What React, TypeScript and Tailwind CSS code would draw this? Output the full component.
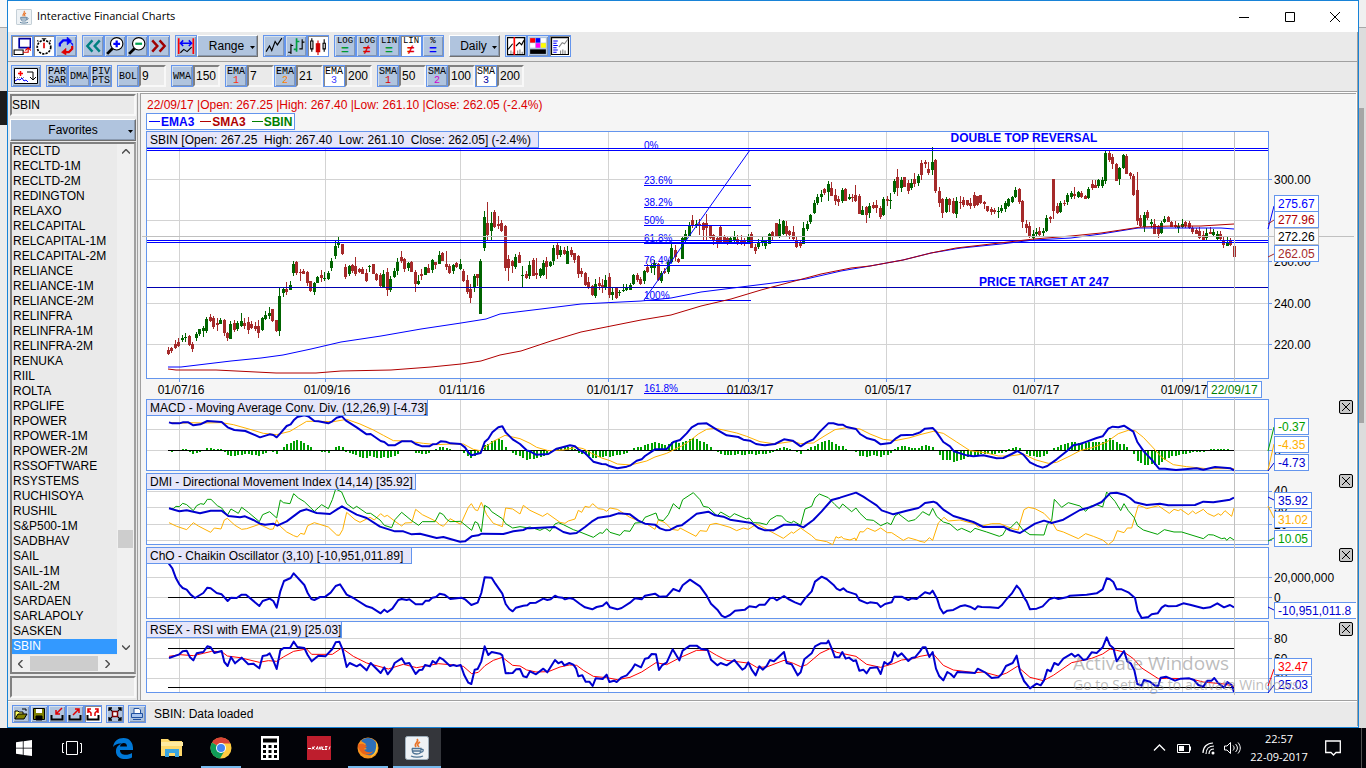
import type { ReactNode } from "react";

const SYMBOLS = [
  "RECLTD", "RECLTD-1M", "RECLTD-2M", "REDINGTON", "RELAXO", "RELCAPITAL", "RELCAPITAL-1M", "RELCAPITAL-2M",
  "RELIANCE", "RELIANCE-1M", "RELIANCE-2M", "RELINFRA", "RELINFRA-1M", "RELINFRA-2M", "RENUKA", "RIIL", "ROLTA",
  "RPGLIFE", "RPOWER", "RPOWER-1M", "RPOWER-2M", "RSSOFTWARE", "RSYSTEMS", "RUCHISOYA", "RUSHIL", "S&P500-1M",
  "SADBHAV", "SAIL", "SAIL-1M", "SAIL-2M", "SARDAEN", "SARLAPOLY", "SASKEN", "SBIN",
];

// One candle per entry: direction, then high, body top, body bottom and low on the plot's y scale.
const CANDLES =
  "r217 220 224 225,r217 218 221 223,r210 214 218 219,r208 212 216 217,g205 208 210 212,g203 207 208 212,r205 206 215 216,r212 214 219 222,g202 204 208 211,g199 199 204 206," +
  "g196 198 201 207,g187 189 201 203,r184 187 191 192,r186 188 197 199,r188 193 195 201,g188 190 194 194,r189 190 203 206,r202 203 208 211,g191 194 209 209,r190 193 200 202," +
  "g191 193 199 201,g183 191 196 197,r188 193 196 199,r187 192 200 204,r191 194 198 199,r192 196 199 201,r190 196 203 208,g187 188 200 201,g181 185 189 190,g177 183 186 189," +
  "r179 179 191 192,r190 190 201 202,g157 166 201 206,g157 159 163 167,r152 159 162 165,g151 155 160 160,g131 134 143 146,r131 132 143 145,r139 142 143 151,r139 141 144 144," +
  "r141 142 153 156,r151 151 161 162,g152 153 162 165,g146 147 153 153,r140 145 148 152,g142 148 149 151,g141 143 149 150,g128 131 138 141,g111 116 126 129,g107 113 115 118," +
  "r114 114 124 125,r134 137 147 149,g135 136 144 146,r134 135 141 143,r127 136 144 146,r138 139 142 143,r137 139 144 144,r139 143 151 152,g135 136 137 142,r134 134 144 144," +
  "r143 144 150 151,r143 145 156 157,g140 144 157 158,r138 142 160 166,g146 149 160 162,g138 141 147 148,g128 132 141 145,r121 127 131 133,r128 129 139 142,g132 133 138 141," +
  "r131 132 142 142,r140 142 154 162,g145 151 154 155,r139 144 146 150,g137 137 145 145,r134 138 143 143,g129 130 140 143,r132 132 135 139,g121 125 134 134,r122 123 131 131," +
  "r121 134 137 140,r134 136 143 144,g134 135 141 144,r132 133 137 138,g129 134 139 140,r139 141 151 152,r145 150 162 164,r154 159 168 173,g144 146 157 162,r144 144 148 156," +
  "g129 131 184 184,g81 87 118 121,r72 93 105 110,g82 93 101 110,r80 82 97 98,r86 94 96 99,r90 93 101 102,r95 96 138 141,r125 129 138 151,r130 131 136 143," +
  "g124 127 137 139,r122 125 133 133,g136 145 146 157,r141 144 148 149,g131 135 146 149,r128 130 146 146,r128 143 145 149,g138 139 146 148,g130 133 145 146,r127 131 137 149," +
  "g131 132 136 137,g115 118 131 135,r113 115 125 129,g116 120 125 127,r117 120 124 125,g116 121 134 134,r117 120 125 127,r123 123 130 133,r125 126 144 148,r138 141 144 147," +
  "r142 143 155 156,r147 152 158 159,r155 156 165 166,g149 154 166 168,r147 153 156 160,r149 155 157 163,g145 150 158 160,r143 147 165 168,g157 162 165 170,r157 158 168 169," +
  "g160 162 163 166,g154 160 161 162,g154 158 160 161,g153 155 160 160,g144 145 154 155,r143 145 150 152,r147 149 154 155,g140 141 151 154,r134 137 142 143,g134 136 138 143," +
  "g130 133 138 145,r133 134 150 151,g141 143 151 153,r138 141 143 144,g130 132 142 144,g113 118 132 133,r115 120 127 131,r128 129 132 133,g107 108 129 129,g100 104 110 113," +
  "g92 95 106 107,r85 90 95 98,g90 94 96 98,r89 94 96 105,r92 93 100 110,r84 93 98 110,r95 95 108 109,r104 105 111 115,r106 108 112 118,r96 97 112 114," +
  "r105 106 113 114,r106 108 114 115,g106 108 112 113,g101 107 110 113,r105 109 112 115,r105 110 114 115,r108 110 113 116,g104 106 113 114,r102 104 118 118,r114 117 121 124," +
  "g109 113 117 119,g107 111 113 116,g110 111 116 119,g103 104 114 114,r101 102 107 111,r93 93 106 106,g89 94 106 108,g90 91 104 105,r91 96 104 107,r100 101 105 109," +
  "r96 102 109 111,r107 111 117 118,r110 113 116 118,g92 98 114 114,g91 94 99 101,g84 85 92 94,g70 73 83 84,g64 67 73 75,g60 64 67 72,r58 59 63 65," +
  "g51 54 62 71,r52 58 66 66,r59 65 71 75,r66 69 72 76,g58 60 71 73,r58 59 71 71,g64 67 69 70,r64 67 68 72,r55 65 71 72,r64 66 84 84," +
  "g76 80 85 85,r76 77 85 93,g73 76 83 88,r72 75 78 79,r70 75 78 83,r76 78 87 89,g67 69 85 86,r66 69 71 76,g63 70 71 79,g49 51 62 64," +
  "r39 47 58 66,g47 50 58 62,r47 47 57 57,r50 53 61 64,g49 53 58 60,r43 49 54 57,g44 46 53 56,r30 33 45 50,r30 32 34 38,r32 39 43 45," +
  "g17 32 40 45,r29 30 61 63,r57 61 73 77,r68 69 83 88,g67 69 82 83,r68 69 75 82,r68 71 83 84,g67 71 84 88,r66 72 73 79,r67 70 75 77," +
  "r70 70 75 76,r68 73 76 79,r62 65 76 78,r66 66 75 76,r65 65 73 74,r71 72 74 79,r76 76 81 82,r77 79 82 85,r78 80 82 84,g77 81 82 88," +
  "g75 78 81 83,g71 73 79 82,g68 69 76 77,g66 67 72 73,g57 60 67 68,r58 59 72 74,r70 71 92 98,r90 94 98 103,r92 96 107 108,g100 104 108 110," +
  "g98 102 104 107,r97 101 105 106,g98 101 103 106,g85 88 101 102,r86 87 89 93,r49 49 81 89,r73 76 83 84,g71 73 82 83,r70 73 74 76,g63 65 72 75," +
  "g61 63 67 69,r57 64 66 69,g61 62 67 68,r61 63 67 68,r65 66 69 69,g57 59 68 69,r50 54 58 60,r50 55 58 58,g49 50 56 58,g47 50 56 58," +
  "g20 23 51 54,r20 23 30 32,r24 27 34 39,r33 34 51 51,g37 38 49 55,g24 25 38 39,r24 26 44 44,r42 43 46 49,r44 46 65 66,r42 60 91 95," +
  "r85 88 96 97,g82 85 97 102,r80 82 88 90,g89 92 94 98,r89 94 104 104,r95 96 104 108,g91 93 103 104,g86 89 92 93,r86 87 92 92,r91 92 97 97," +
  "r91 95 97 98,g93 96 98 103,g89 94 97 98,r91 92 96 98,r91 93 98 99,r96 98 102 104,r98 100 104 104,r97 101 108 109,r101 105 110 111,g98 103 108 110," +
  "r97 102 104 104,g99 102 105 106,g101 104 109 111,r101 104 109 110,r107 111 115 118,g107 112 116 116,r108 110 115 116,r115 116 127 128";

const EMA3 =
  "27,237 40,237 65,234 90,231 120,228 142,225 170,219 200,212 240,206 280,199 320,193 345,189 359,184 400,179 440,174 460,173 500,171 530,168 560,162 600,157 640,152 665,149 700,141 729,136 762,130 790,123 820,118 860,114 893,110 930,108 960,104 997,98 1030,98 1080,98 1093,99";
const SMA3 =
  "27,239 35,240 75,240 115,242 135,243 175,243 200,241 250,240 290,237 320,234 340,231 359,225 380,221 410,211 440,202 470,196 500,190 530,185 560,176 590,169 620,160 650,152 680,144 710,138 729,136 762,130 790,123 815,118 850,114 893,109 930,106 960,103 1000,97 1030,96 1060,96 1093,94";

// Indicator traces are kept in three sections, each 1170 units wide, at three units to the pixel.
const SECTION = 1170;

const MACD = [
  "87,73 97,76 118,76 128,73 145,73 160,82 181,79 202,69 245,72 263,88 283,96 316,99 347,112 360,118 389,109 400,111 410,118 421,106 440,84 452,79 461,67 472,57 493,52 506,56 523,69 535,70 565,76 577,70 590,59 606,55 617,67 650,88 680,109 692,108 722,129 733,132 745,142 764,142 785,130 815,130 827,138 847,145 868,145 878,139 890,138 902,130 917,131 931,136 962,138 975,148 985,163 994,172 1022,165 1034,132 1045,122 1057,103 1075,88 1087,85 1097,103 1118,124 1140,138 1160,157",
  "0,160 18,170 55,168 80,152 92,149 120,142 135,145 145,154 165,165 190,191 215,198 228,199 240,205 262,211 290,206 302,202 320,188 335,184 345,174 375,154 410,153 430,132 450,126 470,106 485,88 505,77 530,76 560,95 590,112 625,117 640,125 660,128 678,138 705,142 735,138 762,124 788,128 812,145 830,133 850,124 870,101 895,76 910,76 925,80 938,80 950,87 978,93 990,108 1012,121 1035,127 1052,139 1082,135 1098,121 1112,112 1150,110 1165,105",
  "0,103 15,92 38,90 48,100 70,132 90,145 102,160 140,172 160,175 190,172 230,181 250,180 275,168 292,159 310,170 330,193 350,203 368,209 382,204 410,184 440,160 460,142 480,138 500,131 530,120 548,115 565,92 578,86 595,88 612,83 640,101 652,132 672,161 695,185 717,212 735,212 768,216 830,211 850,215 885,207 932,211 942,217",
];
const MACD_SIGNAL = [
  "87,73 118,76 150,74 190,75 245,74 280,80 330,94 370,106 410,110 450,100 475,85 500,70 530,70 580,71 620,64 660,78 700,96 730,112 760,128 800,129 850,136 890,140 930,138 970,138 1000,154 1020,158 1060,130 1095,112 1140,122",
  "0,136 20,148 55,158 100,156 140,148 160,152 185,166 215,180 240,188 262,198 302,201 350,189 375,177 410,166 430,156 455,144 480,128 505,108 530,94 555,91 580,96 620,105 650,115 690,131 735,138 788,130 812,137 850,135 885,113 915,95 950,89 990,93 1020,108 1060,124 1095,128 1140,119",
  "0,110 40,100 70,106 110,132 150,158 200,165 235,174 270,174 310,168 345,185 385,196 410,193 450,174 480,158 520,148 560,132 595,107 625,97 645,98 670,118 700,150 725,178 760,200 800,206 860,212 942,212",
];
const ADX = [
  "87,331 118,340 140,337 180,346 212,338 245,338 265,354 300,358 315,355 340,366 360,377 375,380 400,377 412,383 440,370 480,340 500,334 530,345 570,348 590,335 606,325 625,336 650,350 680,360 720,386 765,400 790,400 815,409 840,407 890,420 910,417 960,431 975,430 995,415 1015,412 1025,407 1090,408 1120,400 1150,396 1160,391",
  "0,391 60,388 75,387 100,402 120,407 140,405 165,387 185,371 205,359 240,354 265,346 300,349 325,368 345,377 375,380 390,391 408,397 420,396 440,385 455,382 480,363 500,347 535,341 555,352 580,356 600,365 665,375 685,390 705,397 730,397 762,380 800,380 820,388 850,366 875,340 905,306 930,299 978,284 1000,296 1015,306 1040,322 1055,337 1090,349 1130,338 1165,330",
  "0,327 15,315 40,311 50,315 70,335 100,354 160,372 190,387 250,386 270,397 300,405 345,377 372,368 395,375 430,365 480,336 510,328 545,312 570,286 590,284 615,291 630,300 645,313 680,321 720,317 745,322 825,321 850,311 880,313 910,308 930,305 942,299",
];
const DI_PLUS = [
  "87,331 100,332 108,325 118,326 128,316 140,320 160,338 170,323 182,317 192,319 202,304 213,304 232,323 245,330 262,352 273,333 295,346 305,328 325,343 358,371 368,350 389,341 410,360 421,306 430,314 450,317 461,287 475,300 493,311 523,340 545,320 565,332 577,305 587,273 605,282 620,317 640,332 650,325 680,346 692,346 720,366 733,382 755,389 765,365 785,343 815,368 836,382 847,371 885,371 899,344 910,350 920,364 930,371 962,370 995,397 1005,371 1013,375 1024,402 1034,322 1047,330 1055,341 1087,362 1097,377 1118,390 1140,386 1160,389",
  "0,387 30,397 45,390 60,400 75,378 85,374 100,380 130,395 150,402 190,418 210,404 218,406 230,392 240,403 270,412 282,398 300,400 315,375 335,374 345,358 378,345 385,365 400,368 415,350 430,317 448,333 458,305 490,284 510,305 520,325 535,328 562,354 572,342 600,358 613,347 650,363 658,360 670,374 690,375 710,380 720,365 740,353 755,354 770,370 785,375 790,369 812,382 825,333 845,325 855,300 868,288 895,299 915,320 928,332 938,318 965,341 978,330 990,346 1010,365 1030,367 1052,383 1072,374 1083,380 1095,354 1105,347 1135,370 1155,365",
  "0,350 8,341 28,352 38,331 50,355 70,372 90,378 112,397 125,391 152,403 165,391 200,402 238,415 248,411 260,391 270,391 290,371 308,395 330,410 372,411 382,378 395,368 403,304 425,328 445,314 480,324 497,340 510,325 530,320 548,327 560,282 585,310 602,338 612,317 625,338 642,358 652,383 670,396 713,409 733,395 762,402 785,402 850,422 865,410 880,411 905,422 915,420 920,427 930,418 942,426",
];
const DI_MINUS = [
  "87,374 110,385 140,395 160,374 175,384 212,403 223,390 243,393 253,366 262,361 285,382 305,394 320,392 358,379 390,394 400,393 410,365 421,385 440,402 450,407 461,413 472,417 482,406 493,409 503,383 523,374 565,387 590,411 598,412 608,395 620,343 645,365 660,373 690,358 703,366 722,347 733,356 742,352 765,370 785,384 795,375 815,374 827,334 847,350 870,361 888,370 899,380 910,385 930,362 962,379 985,328 994,317 1005,335 1013,338 1024,313 1040,350 1060,376 1087,386 1097,330 1118,333 1140,348 1150,322",
  "0,337 38,355 52,346 90,373 105,376 115,369 135,363 145,337 155,343 165,325 178,328 188,317 205,332 220,334 230,340 240,330 262,334 300,358 350,378 375,394 385,366 405,374 425,394 445,397 450,390 498,415 510,398 530,400 540,380 558,376 600,388 620,398 640,390 655,394 680,378 710,394 760,421 785,402 790,406 812,390 845,413 858,425 890,431 908,440 918,416 925,420 935,416 940,422 960,426 975,420 978,428 990,401 1000,402 1012,390 1035,400 1052,390 1072,404 1085,404 1120,427 1135,419 1160,426",
  "0,430 15,433 28,419 38,427 55,375 72,358 85,369 120,366 165,378 175,387 215,377 240,377 280,393 295,396 300,375 312,335 325,328 345,332 372,346 395,370 410,396 430,402 475,422 497,407 520,415 548,426 565,440 580,428 592,398 612,404 622,390 635,390 655,322 670,327 680,332 715,323 748,346 762,334 775,338 782,334 805,350 818,339 827,347 850,334 862,346 882,355 895,347 903,352 915,338 935,355 942,330",
];
const CHAIKIN = [
  "85,495 97,511 108,541 118,559 128,570 140,575 152,590 165,600 190,585 202,569 212,571 230,585 245,589 263,609 273,599 290,600 305,590 318,590 358,624 368,609 389,602 400,609 410,629 421,580 432,549 452,540 461,526 493,561 503,585 514,603 523,606 540,597 556,596 572,584 587,564 600,559 620,590 640,600 680,625 695,629 722,646 733,635 742,642 757,632 775,606 785,603 800,606 808,604 827,619 847,619 857,608 867,608 877,599 888,597 899,587 913,590 931,603 964,599 975,604 994,621 1013,614 1024,585 1034,538 1055,539 1066,557 1087,587 1097,618 1108,633 1118,640 1128,629 1150,623 1162,622",
  "0,615 18,614 40,602 52,606 62,604 75,593 85,598 97,599 105,604 118,600 130,603 150,618 165,628 187,634 200,627 218,623 230,613 240,628 262,634 275,630 300,614 315,601 335,604 345,593 375,587 388,596 410,595 430,573 448,580 458,562 480,545 510,565 530,593 543,617 562,635 575,653 585,658 600,651 615,638 645,635 658,625 678,628 688,620 705,620 720,601 730,599 740,607 762,594 775,603 795,613 812,620 825,602 845,580 855,551 875,536 890,543 910,560 920,572 930,577 940,571 950,580 978,589 988,606 1012,616 1020,613 1042,616 1052,627 1065,618 1085,613 1093,596 1115,596 1135,606 1145,601 1160,603",
  "0,595 15,583 30,587 38,578 52,604 60,630 70,646 82,638 100,636 120,625 135,622 150,626 165,634 173,625 185,627 210,628 235,630 245,622 260,603 275,587 290,563 300,574 312,598 320,610 330,634 350,632 368,625 388,604 403,599 415,603 440,598 450,593 500,590 530,586 548,574 560,541 570,544 580,552 590,574 605,574 625,583 645,600 653,638 665,660 685,657 695,649 713,646 725,629 735,622 745,625 770,624 790,616 810,620 850,631 870,628 892,616 912,628 930,621 942,628",
];
const RSI = [
  "87,780 118,769 128,760 140,758 150,778 160,787 170,766 190,762 202,745 212,748 223,765 245,759 253,792 263,804 273,777 285,796 305,779 325,799 340,797 358,811 368,774 380,772 389,766 400,788 410,813 421,757 431,750 450,750 461,731 472,747 493,750 503,771 515,790 535,773 556,775 577,753 587,733 598,731 608,755 620,807 629,795 650,805 660,799 680,817 692,795 722,825 733,808 743,829 757,811 764,795 785,781 795,797 808,795 827,828 838,816 847,815 855,801 870,805 878,789 888,796 899,779 910,785 930,804 940,801 950,804 962,801 973,832 985,854 994,858 1004,815 1013,813 1024,790 1034,745 1045,771 1055,762 1080,767 1087,772 1097,826 1118,825 1128,814 1140,813 1150,835 1160,838",
  "0,820 18,829 40,812 52,823 75,786 85,796 95,791 103,802 118,795 130,800 138,811 145,835 157,832 167,851 178,851 188,864 197,841 218,843 230,830 238,852 252,848 260,852 275,838 290,832 305,815 315,799 333,808 345,782 355,780 365,768 378,769 387,816 397,801 410,794 428,754 448,787 458,758 480,743 500,743 512,752 533,756 543,785 562,802 572,795 590,802 613,786 637,815 645,810 655,793 665,815 677,832 688,805 698,815 710,804 720,786 732,790 762,762 770,795 785,799 803,832 812,823 823,784 845,766 855,745 872,736 890,736 895,728 905,751 915,778 928,778 937,762 947,782 957,779 970,789 978,787 988,818 1000,815 1010,826 1020,810 1042,808 1052,828 1063,792 1073,799 1085,790 1093,762 1103,775 1115,766 1135,789 1145,780 1155,778",
  "0,760 8,748 17,748 28,777 38,762 48,812 58,835 70,847 82,822 92,828 102,838 112,822 165,825 173,812 195,823 215,840 235,838 245,828 258,804 278,795 290,773 300,820 312,849 330,871 350,857 362,862 372,847 382,815 392,820 403,795 415,801 430,782 455,767 465,776 475,770 490,786 500,784 515,763 530,765 548,748 560,718 570,742 580,750 590,790 612,759 622,790 632,796 643,817 652,858 665,863 672,846 690,851 705,863 715,863 722,839 738,836 765,848 782,842 808,841 822,846 835,861 850,866 862,848 875,848 883,840 895,856 912,869 922,852 935,861 942,882",
];
const RSI_EMA = [
  "87,775 120,770 160,773 190,766 215,760 245,761 262,774 300,779 358,793 385,788 410,790 430,777 461,760 500,753 515,769 577,769 605,750 640,775 680,795 720,806 745,813 790,799 830,809 895,797 940,801 970,805 995,827 1015,823 1035,803 1060,787 1087,778 1118,802 1140,804 1160,816",
  "0,818 18,822 55,821 90,807 118,801 140,802 160,817 190,835 230,839 262,845 300,838 335,822 378,794 410,800 448,780 500,757 535,757 560,772 590,787 660,796 680,808 710,807 762,787 790,796 812,806 830,800 870,766 900,752 920,763 978,775 1010,799 1052,808 1090,797 1115,786 1150,782",
  "0,775 40,768 70,802 100,816 165,824 190,822 235,834 260,825 292,805 330,838 370,848 400,832 455,794 515,781 548,768 570,753 590,757 612,762 640,782 665,810 715,842 740,841 810,842 850,852 912,858 942,865",
];

type Point = [number, number];

function joinSections(sections: string[]): Point[] {
  return sections.flatMap((section, s) =>
    section.split(" ").map((pair): Point => {
      const [x, y] = pair.split(",").map(Number);
      return [x + s * SECTION, y];
    }),
  );
}

function sample(points: Point[], x: number) {
  const i = points.findIndex((p) => p[0] >= x);
  if (i < 0) return points[points.length - 1][1];
  if (i === 0) return points[0][1];
  const [x0, y0] = points[i - 1];
  const [x1, y1] = points[i];
  return x1 === x0 ? y1 : y0 + ((y1 - y0) * (x - x0)) / (x1 - x0);
}

const MONTHS = [
  { x: 38, label: "01/07/16" },
  { x: 184, label: "01/09/16" },
  { x: 319, label: "01/11/16" },
  { x: 467, label: "01/01/17" },
  { x: 607, label: "01/03/17" },
  { x: 745, label: "01/05/17" },
  { x: 893, label: "01/07/17" },
  { x: 1041, label: "01/09/17" },
];

const BAR_STEP = 3.472;
const CURSOR_X = 1093;

/* ---------- chart pieces ---------- */

function Tag({ y, w, color, text, border = "#6495ed" }: { y: number; w: number; color: string; text: string; border?: string }) {
  return (
    <g>
      <rect x="1133.5" y={y + 0.5} width={w} height="16" fill="#fff" stroke={border} shapeRendering="crispEdges" />
      <text x="1137" y={y + 13} fill={color}>{text}</text>
    </g>
  );
}

function PlotTitle({ y, w, text }: { y: number; w: number; text: string }) {
  return (
    <g>
      <rect x="5.5" y={y + 0.5} width={w} height="16" fill="#e6e6fa" stroke="#6495ed" shapeRendering="crispEdges" />
      <text x="9" y={y + 13} xmlSpace="preserve">{text}</text>
    </g>
  );
}

function PriceChart() {
  return (
    <svg viewBox="0 0 1215 269" className="block w-full text-[12px]" role="img" aria-label="SBIN daily price">
      <g shapeRendering="crispEdges">
        <rect x="5.5" y="1.5" width="1122" height="247" fill="#fff" stroke="#6495ed" />
        <g stroke="#d3d3d3">
          {MONTHS.map((m) => <path key={m.x} d={`M${m.x + 0.5} 2V248`} />)}
          {[49, 90, 131, 173, 214].map((y) => <path key={y} d={`M6 ${y + 0.5}H1127`} />)}
        </g>
        <g stroke="#6495ed">
          {MONTHS.map((m) => <path key={m.x} d={`M${m.x + 0.5} 248v4`} />)}
          {[49, 131, 173, 214].map((y) => <path key={y} d={`M1127 ${y + 0.5}h4`} />)}
        </g>
        {CANDLES.split(",").map((candle, i) => {
          const [high, top, bottom, low] = candle.slice(1).split(" ").map(Number);
          const x = Math.round(27 + i * BAR_STEP);
          return (
            <g key={i} fill={candle[0] === "g" ? "#006400" : "#a52a2a"}>
              <rect x={x} y={high} width="1" height={Math.max(1, low - high)} />
              <rect x={x - 1} y={top} width="3" height={Math.max(1, bottom - top)} />
            </g>
          );
        })}
        <g stroke="#0000ff">
          <path d="M6 18.5H1127M6 20.5H1127M6 110.5H1127M6 112.5H1127" />
          <path d="M6 157.5H1127" stroke="#0000b0" />
          <path d="M503 55.5H610M503 77.5H610M503 95.5H610M503 113.5H610M503 135.5H610M503 170.5H610M503 263.5H610" />
        </g>
      </g>
      <polyline points={EMA3} fill="none" stroke="#0000ff" />
      <polyline points={SMA3} fill="none" stroke="#b00000" />
      <path d="M503 170L609 20" stroke="#0000ff" />
      <g fill="#0000ff" className="text-[10px]">
        <text x="503" y="19">0%</text>
        <text x="503" y="54">23.6%</text>
        <text x="503" y="76">38.2%</text>
        <text x="503" y="94">50%</text>
        <text x="503" y="112">61.8%</text>
        <text x="503" y="134">76.4%</text>
        <text x="503" y="169">100%</text>
        <text x="503" y="262">161.8%</text>
      </g>
      <g fill="#0000ff" className="font-bold" textAnchor="middle">
        <text x="883" y="12">DOUBLE TOP REVERSAL</text>
        <text x="903" y="156">PRICE TARGET AT 247</text>
      </g>
      {MONTHS.map((m) => <text key={m.x} x={m.x + 2} y="264" textAnchor="middle">{m.label}</text>)}
      <text x="1133" y="54">300.00</text>
      <text x="1133" y="136">260.00</text>
      <text x="1133" y="178">240.00</text>
      <text x="1133" y="219">220.00</text>
      <path d={`M1 106.5H1213M${CURSOR_X + 0.5} 2V269`} stroke="#c0c0c0" />
      <path d="M1127 99L1133 76" stroke="#0000ff" />
      <path d="M1127 94L1133 90M1127 127L1133 124" stroke="#a52a2a" />
      <Tag y={65} w={44} color="#0000ff" text="275.67" />
      <Tag y={81} w={44} color="#b00000" text="277.96" />
      <Tag y={98} w={44} color="#000" text="272.26" border="#c0c0c0" />
      <Tag y={115} w={44} color="#a52a2a" text="262.05" />
      <rect x="1066.5" y="251.5" width="54" height="16" fill="#fff" stroke="#6495ed" shapeRendering="crispEdges" />
      <text x="1070" y="264" fill="#008000">22/09/17</text>
      <PlotTitle y={1} w={392} text="SBIN [Open: 267.25  High: 267.40  Low: 261.10  Close: 262.05] (-2.4%)" />
    </svg>
  );
}

interface PanelProps {
  index: number;
  title: string;
  titleWidth: number;
  grid: number[];
  levels?: number[];
  traces: { points: string[]; color: string; width: number }[];
  histogram?: ReactNode;
  children: ReactNode;
}

function IndicatorPanel({ index, title, titleWidth, grid, levels = [], traces, histogram, children }: PanelProps) {
  return (
    <section className="relative">
      <svg viewBox="0 0 1215 74" className="block w-full text-[12px]" role="img" aria-label={title}>
        <g shapeRendering="crispEdges">
          <rect x="5.5" y="0.5" width="1122" height="71" fill="#fff" stroke="#6495ed" />
          <g stroke="#d3d3d3">
            {MONTHS.map((m) => <path key={m.x} d={`M${m.x + 0.5} 1V71`} />)}
            {grid.map((y) => <path key={y} d={`M6 ${y + 0.5}H1127`} />)}
          </g>
          {grid.map((y) => <path key={y} d={`M1127 ${y + 0.5}h4`} stroke="#6495ed" />)}
        </g>
        {histogram}
        {levels.map((y) => (
          <path key={y} d={`M27 ${y + 0.5}H1093`} stroke="#000" shapeRendering="crispEdges" />
        ))}
        <g transform={`translate(-1 ${-1 - index * 74}) scale(0.33333)`} fill="none" strokeLinejoin="round">
          {traces.map((t) => (
            <polyline key={t.color} points={joinSections(t.points).join(" ")} stroke={t.color} strokeWidth={t.width * 3} />
          ))}
        </g>
        <path d={`M${CURSOR_X + 0.5} 0V74`} stroke="#c0c0c0" />
        {children}
        <PlotTitle y={0} w={titleWidth} text={title} />
      </svg>
      <button aria-label={`Close ${title}`} className="absolute top-px right-[3px] size-[14px] rounded-xs border border-black bg-[#c8c8c8]">
        <svg viewBox="0 0 12 12" className="block size-3" stroke="#000">
          <path d="M2 2L10 10M10 2L2 10" />
        </svg>
      </button>
    </section>
  );
}

function MacdHistogram() {
  const macd = joinSections(MACD);
  const signal = joinSections(MACD_SIGNAL);
  return (
    <g fill="#00a000" shapeRendering="crispEdges">
      {Array.from({ length: 306 }, (_, i) => {
        const x = 87 + i * BAR_STEP * 3;
        const h = Math.round((sample(signal, x) - sample(macd, x)) / 3);
        if (h === 0) return null;
        return <rect key={i} x={Math.round(x / 3 - 2)} y={h > 0 ? 51 - h : 52} width="2" height={Math.abs(h)} />;
      })}
    </g>
  );
}

/* ---------- toolbar pieces ---------- */

const RAISED = "border border-[#6495ed] bg-[#b0c4de] shadow-[inset_1px_1px_#d4e0ee,inset_-1px_-1px_#8296b4]";
const PRESSED = "border border-[#6495ed] bg-white shadow-[inset_1px_1px_#8a8a8a]";
const SUNKEN = "border-2 border-t-[#808080] border-l-[#808080] border-r-[#f8f8f8] border-b-[#f8f8f8] bg-[#eaeaea] outline-none";

function Tool({ label, on, children }: { label: string; on?: boolean; children: ReactNode }) {
  return (
    <button aria-label={label} aria-pressed={!!on} className={`flex size-[22px] items-center justify-center ${on ? PRESSED : RAISED}`}>
      <svg viewBox="0 0 16 16" className="size-[18px] shrink-0" fill="none" stroke="#000">{children}</svg>
    </button>
  );
}

function TextTool({ top, bottom, color = "text-black", on }: { top: string; bottom?: string; color?: string; on?: boolean }) {
  return (
    <button className={`flex h-[22px] w-[22px] flex-col items-center justify-center font-['Liberation_Mono'] text-[10px] leading-[9px] ${on ? PRESSED : RAISED}`}>
      <span>{top}</span>
      {bottom && <span className={color}>{bottom}</span>}
    </button>
  );
}

function Period({ top, bottom, color, value, on }: { top: string; bottom?: string; color?: string; value: string; on?: boolean }) {
  return (
    <div className="flex">
      <TextTool top={top} bottom={bottom} color={color} on={on} />
      <input aria-label={`${top} ${bottom ?? ""} period`} defaultValue={value} className={`h-[22px] w-[27px] pl-px ${SUNKEN}`} />
    </div>
  );
}

function Dropdown({ label, className }: { label: string; className: string }) {
  return (
    <div className="relative">
      <select aria-label={label} className={`h-[22px] appearance-none border border-t-white border-l-white border-r-[#707070] border-b-[#707070] bg-[#b0c4de] text-center shadow-[inset_-1px_-1px_#8a9ab0] ${className}`}>
        <option>{label}</option>
      </select>
      <svg viewBox="0 0 5 3" className="pointer-events-none absolute top-[11px] right-[3px] h-[3px] w-[5px]">
        <path d="M0 0H5L2.5 3Z" />
      </svg>
    </div>
  );
}

function ScaleTool({ name, mark, color, on }: { name: string; mark: string; color: string; on?: boolean }) {
  return (
    <button aria-label={`${name} scale ${mark}`} className={`flex size-[22px] flex-col items-center pt-px font-['Liberation_Mono'] text-[9px] leading-[9px] ${on ? PRESSED : RAISED}`}>
      <span>{name}</span>
      <span className={`text-[13px] leading-[9px] font-bold ${color}`}>{mark}</span>
    </button>
  );
}

function MainToolbar() {
  return (
    <div className="flex h-[30px] gap-[5px] border-b border-[#a0a0a0] bg-[#eaeaea] px-[3px] pt-[3px] shadow-[0_1px_#fff]">
      <div className="flex">
        <Tool label="New window" on>
          <path d="M5.500 1.500h10v8h-10z" stroke="#0000a0" strokeWidth="1.500" />
          <path d="M1 11.500h8v4H1z" />
          <path d="M9 13.500h4.500V10M11 12l2.500-2.500L16 12" stroke="#e00000" />
        </Tool>
        <Tool label="Timer" on>
          <circle cx="8" cy="9" r="6" strokeDasharray="2 1" strokeWidth="1.500" />
          <path d="M6 1.500h4M8 1v2M2 3l1 1M14 3l-1 1" />
          <path d="M8 5v5" stroke="#e00000" strokeWidth="1.500" />
        </Tool>
        <Tool label="Refresh">
          <path d="M2.500 8.500V6l3-3h4" stroke="#0000ff" strokeWidth="2" />
          <path d="M9 0l4 3.500L9 7zM11 4l3 2v2" fill="#0000ff" stroke="#0000ff" strokeWidth="0.500" />
          <path d="M13.500 8v2.500l-3 3h-3" stroke="#e00000" strokeWidth="2" />
          <path d="M8 10l-4 3.500L8 16z" fill="#e00000" stroke="#e00000" strokeWidth="0.500" />
        </Tool>
      </div>
      <div className="flex">
        <Tool label="Back"><path d="M7.500 3L3 8l4.500 5M14 3L9.500 8l4.500 5" stroke="#008080" strokeWidth="2.200" /></Tool>
        <Tool label="Zoom in">
          <path d="M6 10L1 15" strokeWidth="2.500" />
          <circle cx="9.500" cy="6" r="5.500" fill="#fff" />
          <path d="M6.500 6h6M9.500 3v6" stroke="#0000ff" strokeWidth="2" />
        </Tool>
        <Tool label="Zoom out">
          <path d="M6 10L1 15" strokeWidth="2.500" />
          <circle cx="9.500" cy="6" r="5.500" fill="#fff" />
          <path d="M6.500 6h6" stroke="#00a050" strokeWidth="2" />
        </Tool>
        <Tool label="Forward"><path d="M2 3l4.500 5L2 13M8.500 3L13 8l-4.500 5" stroke="#a00000" strokeWidth="2.200" /></Tool>
      </div>
      <div className="flex">
        <Tool label="Fit range">
          <path d="M1.500 1v14M14.500 1v14" stroke="#ff0000" strokeWidth="1.500" />
          <path d="M3 5.500h10M5.500 3L3 5.500 5.500 8M10.500 3L13 5.500 10.500 8" stroke="#0000ff" strokeWidth="1.300" />
          <path d="M3 14l3-3 3 2 4-4" />
        </Tool>
        <Dropdown label="Range" className="w-[61px] pr-[2px]" />
      </div>
      <div className="flex">
        <Tool label="Line"><path d="M1 13l3-5 2 4 3-8 2 3 4-6" /></Tool>
        <Tool label="Bars">
          <path d="M3.500 6v9M1 13.500h2M3.500 7.500h2M13.500 2v9M11 10.500h2M13.500 4.500h2" />
          <path d="M8.500 1v12M6 11h2.500M8.500 4H11" stroke="#00a040" strokeWidth="1.500" />
        </Tool>
        <Tool label="Candles" on>
          <path d="M2.500 1v2M2.500 11v2M13.500 2v3M13.500 10v3M1.500 3.500h2v7h-2zM12.500 5.500h2v5h-2z" />
          <path d="M8 3v13" stroke="#d00000" />
          <path d="M6.500 6h3v7h-3z" fill="#d00000" stroke="#d00000" />
        </Tool>
      </div>
      <div className="flex">
        <ScaleTool name="LOG" mark="=" color="text-[#009a30]" />
        <ScaleTool name="LOG" mark="≠" color="text-[#e00000]" />
        <ScaleTool name="LIN" mark="=" color="text-[#009a30]" />
        <ScaleTool name="LIN" mark="≠" color="text-[#e00000]" on />
        <ScaleTool name="%" mark="=" color="text-[#0000ff]" />
      </div>
      <Dropdown label="Daily" className="w-[51px] pr-[2px]" />
      <div className="flex">
        <Tool label="Crosshair">
          <path d="M0.500 0.500h15v15H0.500z" fill="#fff" />
          <path d="M3.500 12v3M5.500 13v2M9.500 12v3M11.500 11v4M13.500 13v2" stroke="#888" />
          <path d="M1 11l4-5M8 8l3-3 2 2 2-4" />
          <path d="M6.500 0v16" stroke="#ff0000" strokeWidth="1.500" />
        </Tool>
        <Tool label="Colours">
          <g stroke="none">
            <path d="M1 1h4.500v4H1z" fill="#ff0000" />
            <path d="M6 1h4v4H6z" fill="#0000ff" />
            <path d="M10.500 1H15v4h-4.500z" fill="#fff" />
            <path d="M1 5.500h4.500v4H1z" fill="#fff" />
            <path d="M6 5.500h4v4H6z" fill="#ff00ff" />
            <path d="M10.500 5.500H15v4h-4.500z" fill="#ffff00" />
            <path d="M1 11h14v4H1z" fill="#000" />
          </g>
        </Tool>
        <Tool label="Data table" on>
          <path d="M0.500 0.500h15v15H0.500z" />
          <path d="M2 3.500h4M2 5.500h3M2 7.500h4M2 9.500h3M2 11.500h4M2 13.500h3" stroke="#0000ff" />
          <path d="M7 9l3-4 2 1 3-4M8.500 12v3M10.500 11v4M12.500 12v3" stroke="#888" />
        </Tool>
      </div>
    </div>
  );
}

function StudyToolbar() {
  return (
    <div className="flex h-[30px] gap-[5px] border-b border-[#a0a0a0] bg-[#eaeaea] px-[3px] pt-[3px] shadow-[0_1px_#fff]">
      <button aria-label="Add study" className={`flex h-[22px] w-[30px] items-center justify-center ${RAISED}`}>
        <svg viewBox="0 0 24 16" className="h-4 w-6" fill="none" stroke="#000">
          <path d="M0.500 0.500h23v15H0.500z" fill="#fff" />
          <path d="M4 5.500h5M6.500 3v5" stroke="#ff0000" strokeWidth="1.500" />
          <path d="M13 4h6v7M16 9l3 3 3-3" />
          <path d="M1 9.500h10" stroke="#888" strokeDasharray="1 1" />
          <path d="M1 13l3-2 2 1 2-2 2 3 2-1 2 2" stroke="#0000ff" />
        </svg>
      </button>
      <div className="flex">
        <TextTool top="PAR" bottom="SAR" />
        <TextTool top="DMA" />
        <TextTool top="PIV" bottom="PTS" />
      </div>
      <Period top="BOL" value="9" />
      <Period top="WMA" value="150" />
      <div className="flex">
        <Period top="EMA" bottom="1" color="text-[#ff3010]" value="7" />
        <Period top="EMA" bottom="2" color="text-[#ff8000]" value="21" />
        <Period top="EMA" bottom="3" color="text-[#4040ff]" value="200" on />
      </div>
      <div className="flex">
        <Period top="SMA" bottom="1" color="text-[#e00000]" value="50" />
        <Period top="SMA" bottom="2" color="text-[#d000d0]" value="100" />
        <Period top="SMA" bottom="3" color="text-[#0000a0]" value="200" on />
      </div>
    </div>
  );
}

function JavaCup({ className }: { className: string }) {
  return (
    <svg viewBox="0 0 24 24" className={className} fill="none">
      <rect x="0.500" y="0.500" width="23" height="23" rx="2" fill="#eef2f5" stroke="#9fb0bd" />
      <path d="M12 3c3 3-4 4-1 8M15 6c-3 2-3 3-1 5" stroke="#e8762c" strokeWidth="1.700" />
      <path d="M7 12.500h9c0 5-1 5.500-4.500 5.500S7.500 17 7 12.500M16 13.500c3-1 3 2 0 3M6 20c3 1.500 9 1.500 12 0M8 15h7" stroke="#4d7394" strokeWidth="1.300" />
    </svg>
  );
}

function SymbolPanel() {
  return (
    <aside className="flex w-[130px] shrink-0 flex-col border-r border-[#a0a0a0] bg-[#eaeaea] pr-px pb-px pl-[2px]">
      <input aria-label="Symbol" defaultValue="SBIN" className={`mt-px h-[22px] w-full ${SUNKEN}`} />
      <div className="mt-[3px]">
        <Dropdown label="Favorites" className="w-full" />
      </div>
      <div className="mt-px flex h-[532px] flex-col border-2 border-t-[#808080] border-r-[#a0a0a0] border-b-[#808080] border-l-[#808080]">
        <div className="flex flex-1">
          <ul role="listbox" aria-label="Favorites" className="flex-1 leading-[15px]">
            {SYMBOLS.map((s) => (
              <li key={s} role="option" aria-selected={s === "SBIN"} className={s === "SBIN" ? "bg-[#3399ff] pl-px text-white" : "pl-px"}>
                {s}
              </li>
            ))}
          </ul>
          <div className="flex w-[17px] flex-col items-center justify-between bg-[#f0f0f0] py-[5px]">
            <svg viewBox="0 0 8 5" className="h-[5px] w-2" fill="none" stroke="#505050" strokeWidth="1.500"><path d="M0 4.500L4 0.500 8 4.500" /></svg>
            <div className="mt-[376px] h-[18px] w-[15px] bg-[#cdcdcd]" />
            <svg viewBox="0 0 8 5" className="mt-auto h-[5px] w-2" fill="none" stroke="#505050" strokeWidth="1.500"><path d="M0 0.500L4 4.500 8 0.500" /></svg>
          </div>
        </div>
        <div className="flex h-[17px] items-center bg-[#f0f0f0] pl-[6px]">
          <svg viewBox="0 0 5 8" className="h-2 w-[5px]" fill="none" stroke="#505050" strokeWidth="1.500"><path d="M4.500 0L0.500 4 4.500 8" /></svg>
          <div className="mx-[7px] h-[15px] w-[68px] bg-[#cdcdcd]" />
          <svg viewBox="0 0 5 8" className="h-2 w-[5px]" fill="none" stroke="#505050" strokeWidth="1.500"><path d="M0.500 0L4.500 4 0.500 8" /></svg>
        </div>
      </div>
      <input aria-label="Filter" className={`mt-[2px] h-[22px] w-full ${SUNKEN}`} />
    </aside>
  );
}

function LegendEntry({ name, color }: { name: string; color: string }) {
  return (
    <span className={`flex items-center gap-px ${color}`}>
      <span className="h-px w-[11px] bg-current" />
      {name}
    </span>
  );
}

function ChartBoard() {
  return (
    <main className="relative ml-[2px] min-w-0 flex-1 border-t border-l border-[#a0a0a0] bg-[#f5f5f5] pb-[5px]">
      <p className="pt-[4px] pl-[6px] leading-[14px] text-[#dc0000]">
        22/09/17 |Open: 267.25 |High: 267.40 |Low: 261.10 |Close: 262.05 (-2.4%)
      </p>
      <div className="mt-px ml-[5px] flex h-[17px] w-fit items-center gap-[6px] border border-[#6495ed] bg-white px-[2px] font-bold">
        <LegendEntry name="EMA3" color="text-[#0000ff]" />
        <LegendEntry name="SMA3" color="text-[#b00000]" />
        <LegendEntry name="SBIN" color="text-[#008000]" />
      </div>
      <PriceChart />
      <IndicatorPanel
        index={0}
        title="MACD - Moving Average Conv. Div. (12,26,9) [-4.73]"
        titleWidth={281}
        grid={[30, 51]}
        levels={[51]}
        histogram={<MacdHistogram />}
        traces={[
          { points: MACD_SIGNAL, color: "#ffb000", width: 1 },
          { points: MACD, color: "#0000d0", width: 2 },
        ]}
      >
        <path d="M1127 52L1133 28" stroke="#00a000" />
        <path d="M1127 71L1133 45" stroke="#ffb000" />
        <path d="M1127 72L1133 64" stroke="#0000d0" />
        <text x="1133" y="57">0</text>
        <Tag y={19} w={34} color="#00a000" text="-0.37" />
        <Tag y={37} w={34} color="#ffb000" text="-4.35" />
        <Tag y={55} w={34} color="#0000d0" text="-4.73" />
      </IndicatorPanel>
      <IndicatorPanel
        index={1}
        title="DMI - Directional Movement Index (14,14) [35.92]"
        titleWidth={269}
        grid={[18, 34, 51, 67]}
        traces={[
          { points: DI_MINUS, color: "#ffb000", width: 1 },
          { points: DI_PLUS, color: "#00a000", width: 1 },
          { points: ADX, color: "#0000d0", width: 2 },
        ]}
      >
        <text x="1133" y="22">40</text>
        <text x="1133" y="39">30</text>
        <text x="1133" y="56">20</text>
        <path d="M1127 24L1133 27" stroke="#0000d0" />
        <path d="M1127 33L1133 45" stroke="#ffb000" />
        <path d="M1127 68L1133 65" stroke="#00a000" />
        <Tag y={19} w={37} color="#0000d0" text="35.92" />
        <Tag y={38} w={37} color="#ffb000" text="31.02" />
        <Tag y={57} w={37} color="#00a000" text="10.05" />
      </IndicatorPanel>
      <IndicatorPanel
        index={2}
        title="ChO - Chaikin Oscillator (3,10) [-10,951,011.89]"
        titleWidth={265}
        grid={[30, 50]}
        levels={[50]}
        traces={[{ points: CHAIKIN, color: "#0000d0", width: 2 }]}
      >
        <text x="1133" y="35">20,000,000</text>
        <text x="1133" y="55">0</text>
        <path d="M1127 60L1133 63" stroke="#0000d0" />
        <Tag y={55} w={90} color="#0000d0" text="-10,951,011.8" />
      </IndicatorPanel>
      <IndicatorPanel
        index={3}
        title="RSEX - RSI with EMA (21,9) [25.03]"
        titleWidth={195}
        grid={[17, 37, 57]}
        levels={[27, 66]}
        traces={[
          { points: RSI_EMA, color: "#ff0000", width: 1 },
          { points: RSI, color: "#0000d0", width: 2 },
        ]}
      >
        <text x="1133" y="22">80</text>
        <text x="1133" y="42">60</text>
        <text x="1133" y="61">40</text>
        <path d="M1127 65L1133 48" stroke="#ff0000" />
        <path d="M1127 72L1133 64" stroke="#0000d0" />
        <Tag y={37} w={37} color="#ff0000" text="32.47" />
        <Tag y={55} w={37} color="#0000d0" text="25.03" />
      </IndicatorPanel>
      <div className="pointer-events-none absolute right-[42px] bottom-[5px] w-[241px] font-['Open_Sans'] whitespace-nowrap text-[#909090]/60">
        <p className="text-[19px] leading-[24px]">Activate Windows</p>
        <p className="text-[14px] leading-[20px]">Go to Settings to activate Windows.</p>
      </div>
    </main>
  );
}

function SmallTool({ label, on, children }: { label: string; on?: boolean; children: ReactNode }) {
  return (
    <button aria-label={label} className={`flex size-[18px] items-center justify-center ${on ? PRESSED : RAISED}`}>
      <svg viewBox="0 0 14 14" className="size-[14px]" fill="none" stroke="#000">{children}</svg>
    </button>
  );
}

function StatusBar() {
  const tray = "M1.500 8v4.500h11V8";
  return (
    <footer className="flex h-[26px] items-center gap-1 border-t border-[#a0a0a0] bg-[#eaeaea] pl-1 shadow-[inset_0_1px_#fff]">
      <div className="flex">
        <SmallTool label="Open">
          <path d="M1 12V4h3l1 1h4v2" fill="#ffff60" />
          <path d="M1 12l3-5h9l-3 5z" fill="#808000" />
          <path d="M8 2h4v2" />
        </SmallTool>
        <SmallTool label="Save">
          <path d="M1.500 1.500h11v11h-11z" fill="#808000" />
          <path d="M4 2h6v4H4z" fill="#fff" stroke="none" />
          <path d="M4 9h6v4H4z" fill="#000" />
        </SmallTool>
        <SmallTool label="Import">
          <path d={tray} strokeWidth="2" />
          <path d="M12 1L6 7M6 3v4h4" stroke="#e00000" strokeWidth="1.500" />
        </SmallTool>
        <SmallTool label="Export">
          <path d={tray} strokeWidth="2" />
          <path d="M5 8l6-6M7 2h4v4" stroke="#e00000" strokeWidth="1.500" />
        </SmallTool>
        <SmallTool label="Export all" on>
          <path d={tray} strokeWidth="2" />
          <path d="M5 9V6L2 3M2 6V2h3M9 9V6l3-3M12 6V2H9" stroke="#e00000" strokeWidth="1.500" />
        </SmallTool>
      </div>
      <SmallTool label="Full screen">
        <path d="M4.500 4.500h5v5h-5z" fill="#fff" stroke="#800000" strokeWidth="1.500" />
        <path d="M1 4V1h3M10 1h3v3M13 10v3h-3M4 13H1v-3M1 1l3 3M13 1l-3 3M13 13l-3-3M1 13l3-3" strokeWidth="1.300" />
      </SmallTool>
      <SmallTool label="Print">
        <path d="M4 6V1.500h5L10.500 3v3" fill="#fff" stroke="#2050a0" />
        <path d="M1.500 6.500h11v4h-11zM3 12.500h8" fill="#a8c4ee" stroke="#2050a0" />
      </SmallTool>
      <span className="pl-1">SBIN: Data loaded</span>
    </footer>
  );
}

function TaskButton({ label, running, children }: { label: string; running?: boolean; children: ReactNode }) {
  return (
    <button aria-label={label} className="relative flex h-10 w-12 items-center justify-center">
      <svg viewBox="0 0 24 24" className="size-6" fill="none">{children}</svg>
      {running && <span className="absolute inset-x-1 bottom-0 h-[2px] bg-[#76b9ed]" />}
    </button>
  );
}

function Taskbar() {
  return (
    <div className="flex h-10 bg-[#020308] text-white">
      <TaskButton label="Start">
        <path d="M4 6.300l6.800-1v6.400H4zM11.600 5.200L20 4v7.700h-8.400zM4 12.400h6.800v6.400l-6.800-1zM11.600 12.400H20v7.700l-8.400-1.200z" fill="#fff" />
      </TaskButton>
      <TaskButton label="Task view">
        <path d="M6.500 5.500h11v13h-11zM4 7.500H2.500v9H4M20 7.500h1.500v9H20" stroke="#fff" />
      </TaskButton>
      <div className="ml-[3px] flex gap-px">
        <TaskButton label="Edge">
          <path d="M2 11C3 5 7 2 12.500 2 19 2 22 7 22 12v2H9c0 6 8 5.500 12 3v4.500c-6 3-15 2-16-5C4.500 11 8 8.500 11 7.500 7 7 4 8.500 2 11zM9 10.500h7c0-5-6.500-4.500-7 0z" fill="#0078d7" fillRule="evenodd" />
        </TaskButton>
        <TaskButton label="File Explorer">
          <path d="M1 3h7l2 2h12v15H1z" fill="#ffd96b" />
          <path d="M1 6h22v4H1z" fill="#ffeaa0" />
          <path d="M5 13h14v8h-4v-4H9v4H5z" fill="#3aa5e0" />
        </TaskButton>
        <TaskButton label="Chrome" running>
          <circle cx="12" cy="12" r="10.500" fill="#ffcd41" />
          <path d="M12 12L3 6.500A10.500 10.500 0 0121.500 7.500H12z" fill="#db4437" />
          <path d="M12 12L3 6.500A10.500 10.500 0 0011 22.500L16 14z" fill="#0f9d58" />
          <circle cx="12" cy="12" r="5" fill="#fff" />
          <circle cx="12" cy="12" r="4" fill="#4285f4" />
        </TaskButton>
        <TaskButton label="Calculator">
          <path d="M3 0h18v24H3z" fill="#fff" />
          <path d="M5 2.500h14v4H5zM5 9h3v3H5zM10.500 9h3v3h-3zM16 9h3v3h-3zM5 14h3v3H5zM10.500 14h3v3h-3zM16 14h3v3h-3zM5 19h3v3H5zM10.500 19h3v3h-3zM16 19h3v3h-3z" fill="#000" />
        </TaskButton>
        <TaskButton label="Kahlet">
          <path d="M0 0h24v24H0z" fill="#be1e2d" />
          <path d="M1 12.500h3M6 10.500l-1 3M6 12l2-1.500M6 12l1.500 1.500M9 13.500l1.500-3 .5 3M12 13.500l1-3M14.500 10.500l-1 3M12.500 12h2M16 10.500l-1 3h2M18 10.500h2.500M18 12h2M17.500 13.500H20M23 10.500l-1 3" stroke="#fff" />
        </TaskButton>
        <TaskButton label="Firefox" running>
          <circle cx="12" cy="12" r="10.500" fill="#f7941e" />
          <path d="M5 5c4-5 14-4 16 4 1 5-2 9-6 10-5 1-8-2-8-5l4-1-3-2 2-3z" fill="#2d6fb8" />
          <path d="M2 8c2 0 5-1 7 1l2 1-3 3c1 4 7 4 9 2-1 4-9 5-12 1S1.500 11 2 8z" fill="#e8641b" />
          <path d="M20 5c3 5 2 14-6 16 5-3 7-8 6-16z" fill="#ffd23c" />
        </TaskButton>
        <button aria-label="Java" className="relative flex h-10 w-12 items-center justify-center bg-[#34363b]">
          <JavaCup className="size-6" />
          <span className="absolute inset-x-0 bottom-0 h-[2px] bg-[#76b9ed]" />
        </button>
      </div>
      <div className="ml-auto flex items-center">
        <svg viewBox="0 0 88 16" className="h-4 w-[88px]" fill="none" stroke="#fff">
          <path d="M1 10.500L6.500 5l5.500 5.500" strokeWidth="1.300" />
          <path d="M24.500 4.500h12v8h-12zM37.500 6.500v4" />
          <path d="M26 6h5v5h-5z" fill="#fff" stroke="none" />
          <path d="M50 13c0-6 4-10 10-10M53 14c0-5 3-8 8-8M56 14c0-3 2-5 5-5" strokeWidth="1.200" />
          <circle cx="60" cy="13" r="1.500" fill="#fff" stroke="none" />
          <path d="M71.500 6h2.500l3.500-3.500v11L74 10h-2.500zM80 5.500c1.500 1.500 1.500 3.500 0 5M82.500 4c2.500 2.500 2.500 5.500 0 8M85 2.500c3 3.500 3 7.500 0 11" />
        </svg>
        <div className="w-[76px] text-center font-['Open_Sans'] text-[11px] leading-[18px]">
          <p>22:57</p>
          <p>22-09-2017</p>
        </div>
        <svg viewBox="0 0 16 16" className="mr-5 ml-2 h-4 w-4" fill="none" stroke="#fff" strokeWidth="1.300">
          <path d="M0.700 1h14.600v11.500H11L8.500 15 6 12.500H0.700z" />
        </svg>
        <div className="mr-1 h-10 w-px bg-[#505050]" />
      </div>
    </div>
  );
}

export default function App() {
  return (
    <div className="flex min-h-screen flex-col bg-[#eaeaea] font-['Liberation_Sans',sans-serif] text-[12px] text-black">
      <div className="flex flex-1">
        {/* windows behind this one, left edge */}
        <div className="w-[7px] shrink-0 bg-[#ececec]">
          <div className="h-7 border-b border-[#a8a8a8] bg-[#f8f8f8]" />
          <div className="h-[63px] bg-[#dedede]" />
          <div className="h-[34px] bg-[#1c1c1c]" />
        </div>
        <div className="min-w-0 flex-1 border border-[#1883d7] bg-[#eaeaea]">
          <header className="flex h-[31px] items-center bg-white pl-2">
            <JavaCup className="size-4" />
            <h1 className="ml-[5px] font-['Open_Sans'] text-[11px]">Interactive Financial Charts</h1>
            <div className="ml-auto flex">
              <button aria-label="Minimize" className="flex h-7 w-[46px] items-center justify-center">
                <svg viewBox="0 0 10 10" className="size-[10px]" stroke="#000"><path d="M0 5.500H10" /></svg>
              </button>
              <button aria-label="Maximize" className="flex h-7 w-[45px] items-center justify-center">
                <svg viewBox="0 0 10 10" className="size-[10px]" stroke="#000" fill="none"><path d="M0.500 0.500h9v9h-9z" /></svg>
              </button>
              <button aria-label="Close" className="flex h-7 w-[46px] items-center justify-center">
                <svg viewBox="0 0 10 10" className="size-[10px]" stroke="#000"><path d="M0 0L10 10M10 0L0 10" /></svg>
              </button>
            </div>
          </header>
          <div className="border-r border-[#a0a0a0]">
            <MainToolbar />
            <StudyToolbar />
            <div className="flex border-r border-white pt-px">
              <SymbolPanel />
              <ChartBoard />
            </div>
            <StatusBar />
          </div>
        </div>
        {/* right edge of the window behind, with its scroll bar */}
        <div className="w-[7px] shrink-0 bg-[#dcdcdc]">
          <div className="h-7 border-b border-[#a8a8a8] bg-[#f0f0f0]" />
          <div className="mt-20 h-[315px] w-[5px] bg-[#a6a6a6]" />
        </div>
      </div>
      <Taskbar />
    </div>
  );
}
